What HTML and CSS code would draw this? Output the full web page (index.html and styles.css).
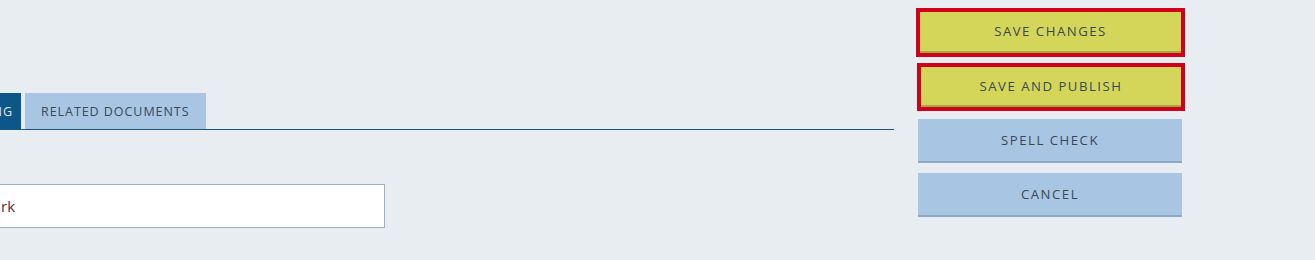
FILE: index.html
```html
<!DOCTYPE html>
<html lang="en">
<head>
<meta charset="utf-8">
<title>Edit document</title>
<link rel="stylesheet" href="styles.css">
</head>
<body>
<div class="page">
  <div class="main">
    <div class="tabs">
      <div class="tab tab-active">LISTING</div>
      <div class="tab">RELATED DOCUMENTS</div>
    </div>
    <div class="field">rk</div>
  </div>
  <div class="actions">
    <button class="btn btn-save btn-first">SAVE CHANGES</button>
    <button class="btn btn-save btn-second">SAVE AND PUBLISH</button>
    <button class="btn btn-plain">SPELL CHECK</button>
    <button class="btn btn-plain">CANCEL</button>
  </div>
</div>
</body>
</html>
```
FILE: styles.css
```css
html, body {
  margin: 0;
  padding: 0;
  background: #e8edf2;
  height: 100%;
  overflow: hidden;
}
.page {
  display: flex;
  align-items: flex-start;
  font-family: "Open Sans", "Liberation Sans", sans-serif;
}
.main {
  width: 894px;
  padding-top: 93px;
  display: flex;
  flex-direction: column;
}
.tabs {
  display: flex;
  gap: 4px;
  border-bottom: 1px solid #1d5580;
  height: 36px;
}
.tab {
  height: 36px;
  box-sizing: border-box;
  display: flex;
  align-items: center;
  padding: 0 16px;
  font-size: 12.5px;
  letter-spacing: 0.95px;
  color: #3b4858;
  background: #a8c6e4;
}
.tab-active {
  background: #0d5689;
  color: #dfe9f2;
  width: 100px;
  margin-left: -79px;
  justify-content: flex-end;
  padding: 0 8px 0 0;
}
.field {
  margin-top: 54px;
  margin-left: -1px;
  width: 386px;
  height: 44px;
  box-sizing: border-box;
  border: 1px solid #9fb0c2;
  background: #ffffff;
  display: flex;
  align-items: center;
  padding-left: 1px;
  font-size: 15px;
  color: #6e2a1c;
}
.actions {
  margin-left: 22px;
  padding-top: 8px;
  display: flex;
  flex-direction: column;
  align-items: flex-start;
}
.btn {
  font-family: "Open Sans", "Liberation Sans", sans-serif;
  font-size: 13.2px;
  letter-spacing: 1.5px;
  color: #3d4650;
  box-sizing: border-box;
  padding: 0;
  margin: 0;
  cursor: pointer;
}
.btn-save {
  width: 269px;
  background: #d4d65a;
  border: 4px solid #d0021b;
  box-shadow: inset 0 -2px 0 #a4a842;
  padding-bottom: 3px;
}
.btn-first {
  height: 49px;
}
.btn-second {
  height: 48px;
  margin-top: 6px;
  margin-left: 1px;
  width: 268px;
}
.btn-plain {
  width: 264px;
  height: 44px;
  margin-left: 2px;
  margin-top: 8px;
  background: #a8c6e4;
  border: none;
  border-bottom: 2px solid #8ea9c6;
}
.btn-plain + .btn-plain {
  margin-top: 10px;
}
```
